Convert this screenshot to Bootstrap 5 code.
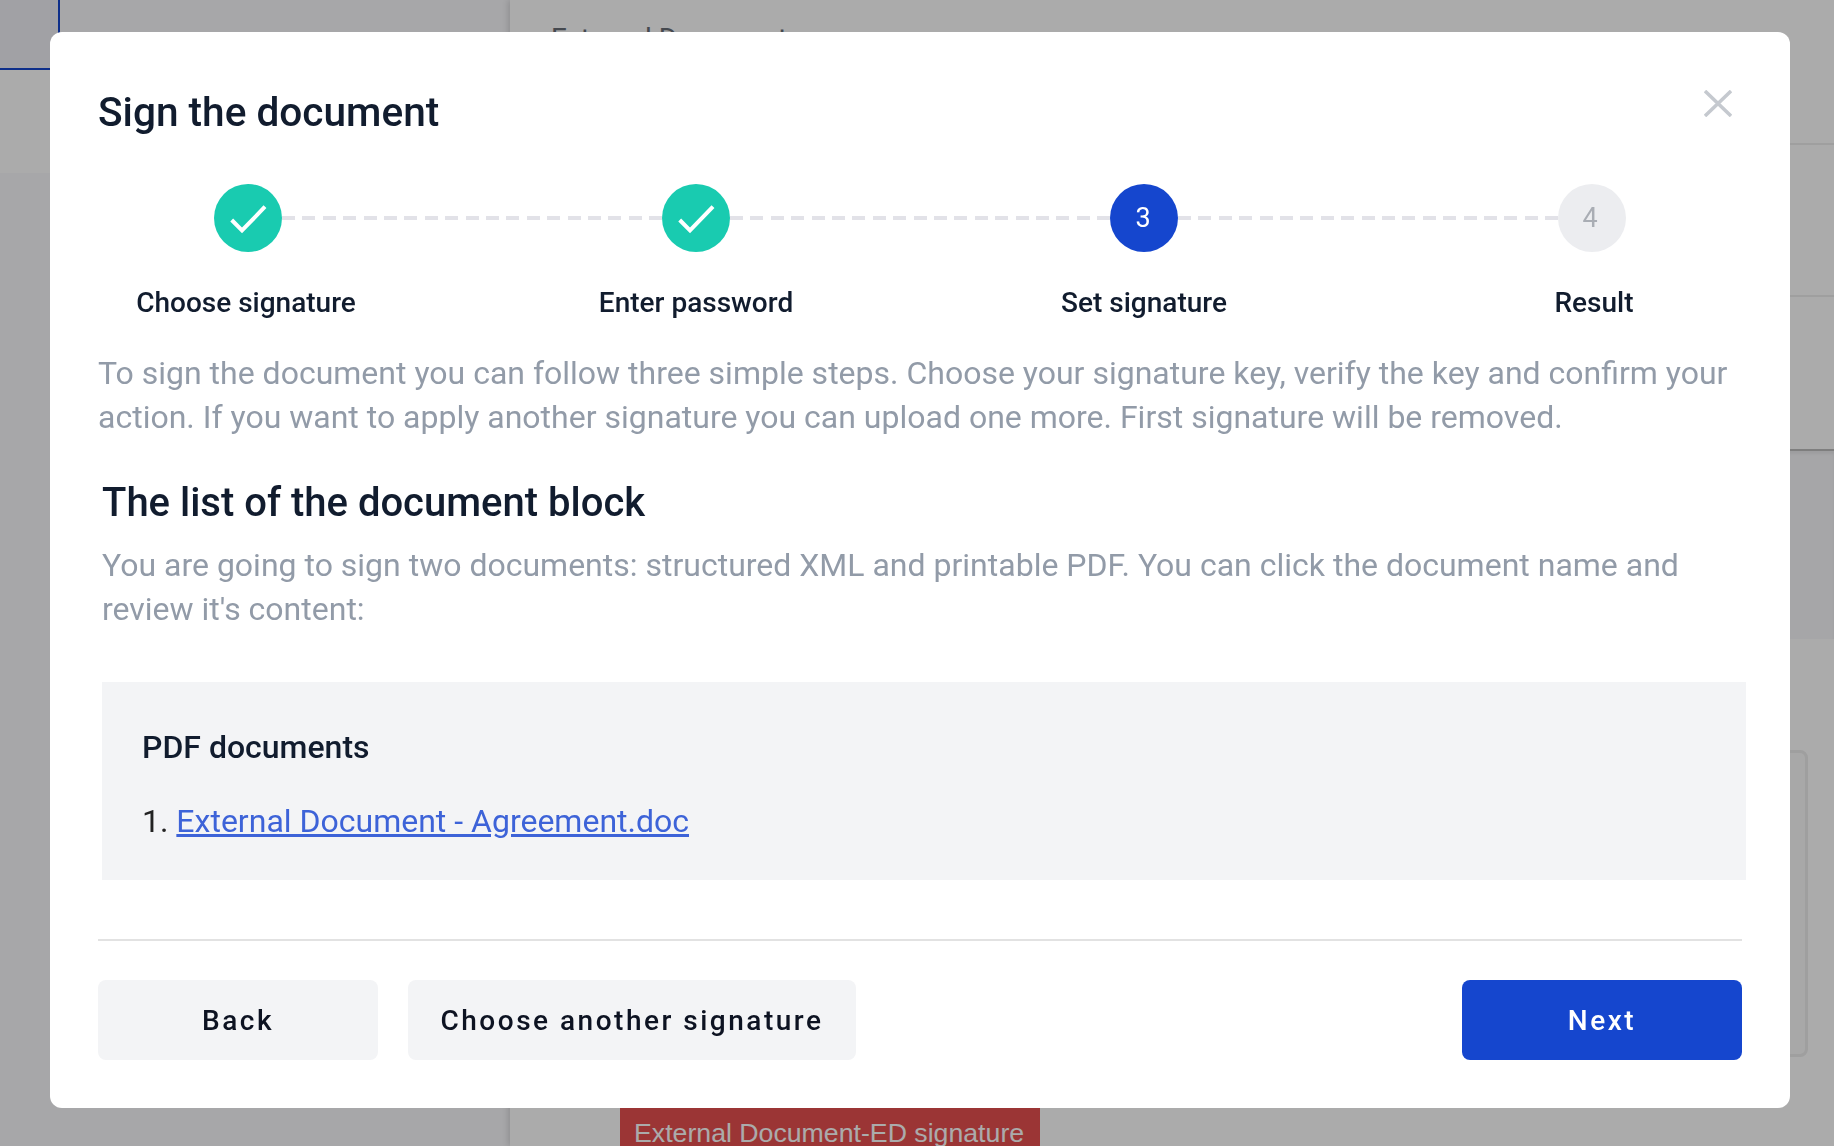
<!DOCTYPE html>
<html lang="en">
<head>
<meta charset="utf-8">
<title>Sign the document</title>
<link rel="stylesheet" href="https://cdn.jsdelivr.net/npm/bootstrap@5.3.0/dist/css/bootstrap.min.css">
<style>
html,body{height:100%;overflow:hidden}
body{font-family:Roboto,"Liberation Sans",sans-serif;background:#fff;color:#111c2e}
.page-wrap{height:1146px}
.side-pane{width:510px;background:#f9f9fc}
.side-logo{width:60px;height:70px;background:#f0f1f7;border-right:2px solid #1546ce;border-bottom:2px solid #1546ce}
.side-active{height:103px;background:#fff}
.main-pane{box-shadow:-2px 0 6px rgba(0,0,0,.14);z-index:1;background:#fff}
.main-row{border-bottom:2px solid #eeeeee}
.main-row-1{height:145px;padding:18px 0 0 41px;font-size:28px;font-weight:400;color:#676d76}
.main-row-2{height:152px}
.main-row-3{height:154px;border-bottom:2px solid #bdbdbd}
.main-band{height:188px;background:#f8f8fb;box-shadow:inset 0 3px 3px rgba(0,0,0,.06)}
.main-lower{padding:111px 26px 0 0}
.outline-box{height:307px;border:3px solid #ededed;border-radius:8px;background:#fbfbfb;margin-left:110px}
.red-tag{width:420px;height:60px;margin:51px 0 0 110px;background:#e84f4f;color:#fff;font-family:"Liberation Sans",sans-serif;font-size:26.7px;line-height:30px;padding:10px 0 0 14px;white-space:nowrap}
.modal-backdrop.dim-layer{opacity:.33;z-index:1050}
.sign-modal{z-index:1055;overflow:hidden}
.sign-dialog{max-width:1740px;width:1740px;margin:32px 0 0 50px}
.sign-content{border:0;border-radius:12px;padding:58px 48px 48px;height:1076px}
.close-x{top:58px;right:58px;width:28px;height:27px;border:0;background:none;padding:0;color:#c5c9cf}
.sign-title{font-size:40.6px;line-height:44px;font-weight:500;margin:0 0 50px;color:#111c2e}
.stepper{padding:0 116px}
.step-item{width:68px}
.step-dot{width:68px;height:68px;font-size:27px;flex:none}
.dot-done{background:#19cbb0}
.dot-now{background:#1546ce;color:#fff;padding:1px 2px 0 0}
.dot-next{background:#ecedf0;color:#a9adb4;padding:1px 4px 0 0}
.step-label{margin-top:31px;font-size:28px;line-height:40px;font-weight:500;white-space:nowrap;color:#111c2e}
.label-first{margin-right:4px}
.label-last{margin-left:4px}
.step-link{height:4px;margin-top:32px;background:repeating-linear-gradient(90deg,#e2e2e8 0 13px,transparent 13px 20.4px)}
.muted-copy{font-size:32px;line-height:44.4px;color:#929ba8;margin:0}
.intro-copy{margin-top:28px}
.inner-block{margin:39px -4px 0 4px}
.block-title{font-size:40px;line-height:48px;font-weight:500;margin:0 0 16px;color:#111c2e}
.doc-box{margin-top:50px;height:198px;background:#f3f4f6;padding:45px 40px 0}
.doc-head{font-size:32px;line-height:40px;font-weight:500;margin:0 0 34px}
.doc-list{font-size:32px;line-height:40px;margin:0;padding:0;list-style:none;color:#222}
.doc-list a{color:#3d63d8}
.foot-rule{margin:59px 0 39px;border:0;border-top:2px solid #e2e2e2;opacity:1}
.foot-row{gap:30px}
.foot-btn{height:80px;border:0;border-radius:8px;font-size:28px;font-weight:500;letter-spacing:2.5px;padding:2px 0 0}
.btn-soft{background:#f3f4f6;color:#0d1322}
.btn-soft:hover{background:#f3f4f6;color:#0d1322}
.btn-blue{background:#1546ce;color:#fff}
.btn-blue:hover{background:#1546ce;color:#fff}
.w-back{width:280px}
.w-other{width:448px}
.w-next{width:280px}
</style>
</head>
<body>
<div class="page-wrap d-flex">
  <aside class="side-pane flex-shrink-0">
    <div class="side-logo"></div>
    <div class="side-active"></div>
  </aside>
  <main class="main-pane flex-grow-1">
    <div class="main-row main-row-1">External Document</div>
    <div class="main-row main-row-2"></div>
    <div class="main-row main-row-3"></div>
    <div class="main-band"></div>
    <div class="main-lower">
      <div class="outline-box"></div>
      <div class="red-tag">External Document-ED signature</div>
    </div>
  </main>
</div>

<div class="modal-backdrop show dim-layer"></div>
<div class="modal d-block sign-modal" tabindex="-1" role="dialog">
  <div class="modal-dialog sign-dialog">
    <div class="modal-content sign-content position-relative">
      <button type="button" class="close-x position-absolute" aria-label="Close">
        <svg width="28" height="27" viewBox="0 0 28 27" fill="none" stroke="currentColor" stroke-width="3.5"><path d="M1 1L27 26M27 1L1 26"/></svg>
      </button>
      <h5 class="sign-title">Sign the document</h5>

      <div class="stepper d-flex align-items-start">
        <div class="step-item d-flex flex-column align-items-center">
          <div class="step-dot dot-done rounded-circle d-flex align-items-center justify-content-center">
            <svg width="68" height="68" viewBox="0 0 68 68" fill="none" stroke="#fff" stroke-width="4"><path d="M17.7 36L28 46.5L51 22.7"/></svg>
          </div>
          <div class="step-label label-first">Choose signature</div>
        </div>
        <div class="step-link flex-grow-1"></div>
        <div class="step-item d-flex flex-column align-items-center">
          <div class="step-dot dot-done rounded-circle d-flex align-items-center justify-content-center">
            <svg width="68" height="68" viewBox="0 0 68 68" fill="none" stroke="#fff" stroke-width="4"><path d="M17.7 36L28 46.5L51 22.7"/></svg>
          </div>
          <div class="step-label">Enter password</div>
        </div>
        <div class="step-link flex-grow-1"></div>
        <div class="step-item d-flex flex-column align-items-center">
          <div class="step-dot dot-now rounded-circle d-flex align-items-center justify-content-center">3</div>
          <div class="step-label">Set signature</div>
        </div>
        <div class="step-link flex-grow-1"></div>
        <div class="step-item d-flex flex-column align-items-center">
          <div class="step-dot dot-next rounded-circle d-flex align-items-center justify-content-center">4</div>
          <div class="step-label label-last">Result</div>
        </div>
      </div>

      <p class="muted-copy intro-copy">To sign the document you can follow three simple steps. Choose your signature key, verify the key and confirm your action. If you want to apply another signature you can upload one more. First signature will be removed.</p>

      <div class="inner-block">
        <h4 class="block-title">The list of the document block</h4>
        <p class="muted-copy">You are going to sign two documents: structured XML and printable PDF. You can click the document name and review it's content:</p>
        <div class="doc-box">
          <div class="doc-head">PDF documents</div>
          <ol class="doc-list">
            <li>1. <a href="#">External Document - Agreement.doc</a></li>
          </ol>
        </div>
      </div>

      <hr class="foot-rule">

      <div class="d-flex foot-row align-items-center">
        <button type="button" class="btn foot-btn btn-soft w-back">Back</button>
        <button type="button" class="btn foot-btn btn-soft w-other">Choose another signature</button>
        <button type="button" class="btn foot-btn btn-blue w-next ms-auto">Next</button>
      </div>
    </div>
  </div>
</div>
<script src="https://cdn.jsdelivr.net/npm/bootstrap@5.3.0/dist/js/bootstrap.bundle.min.js"></script>
</body>
</html>
